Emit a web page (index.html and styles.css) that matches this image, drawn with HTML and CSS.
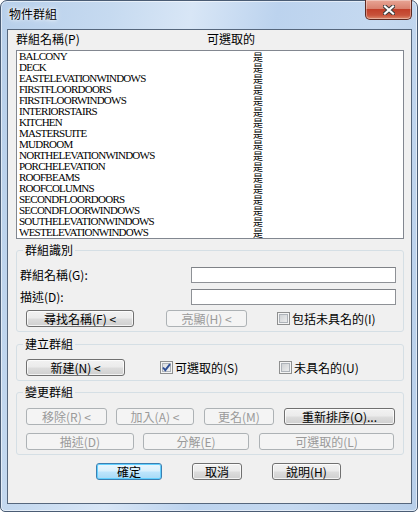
FILE: index.html
```html
<!DOCTYPE html>
<html lang="zh-Hant">
<head>
<meta charset="utf-8">
<title>物件群組</title>
<link rel="stylesheet" href="styles.css">
</head>
<body>
<div class="window">
  <div class="titlebar">
    <span class="title">物件群組</span>
    <div class="close">
      <svg width="12" height="10" viewBox="0 0 12 10">
        <path d="M2 1.5 L10 8.5 M10 1.5 L2 8.5" stroke="#3c3c3c" stroke-width="4.2" stroke-linecap="square" fill="none"/>
        <path d="M2 1.5 L10 8.5 M10 1.5 L2 8.5" stroke="#ffffff" stroke-width="2.2" stroke-linecap="square" fill="none"/>
      </svg>
    </div>
  </div>
  <div class="client">
    <div class="list-header"><span class="col-name">群組名稱(P)</span><span class="col-sel">可選取的</span></div>
    <div class="list">
      <div class="row"><span class="name">BALCONY</span><span class="sel">是</span></div>
      <div class="row"><span class="name">DECK</span><span class="sel">是</span></div>
      <div class="row"><span class="name">EASTELEVATIONWINDOWS</span><span class="sel">是</span></div>
      <div class="row"><span class="name">FIRSTFLOORDOORS</span><span class="sel">是</span></div>
      <div class="row"><span class="name">FIRSTFLOORWINDOWS</span><span class="sel">是</span></div>
      <div class="row"><span class="name">INTERIORSTAIRS</span><span class="sel">是</span></div>
      <div class="row"><span class="name">KITCHEN</span><span class="sel">是</span></div>
      <div class="row"><span class="name">MASTERSUITE</span><span class="sel">是</span></div>
      <div class="row"><span class="name">MUDROOM</span><span class="sel">是</span></div>
      <div class="row"><span class="name">NORTHELEVATIONWINDOWS</span><span class="sel">是</span></div>
      <div class="row"><span class="name">PORCHELEVATION</span><span class="sel">是</span></div>
      <div class="row"><span class="name">ROOFBEAMS</span><span class="sel">是</span></div>
      <div class="row"><span class="name">ROOFCOLUMNS</span><span class="sel">是</span></div>
      <div class="row"><span class="name">SECONDFLOORDOORS</span><span class="sel">是</span></div>
      <div class="row"><span class="name">SECONDFLOORWINDOWS</span><span class="sel">是</span></div>
      <div class="row"><span class="name">SOUTHELEVATIONWINDOWS</span><span class="sel">是</span></div>
      <div class="row"><span class="name">WESTELEVATIONWINDOWS</span><span class="sel">是</span></div>
    </div>

    <div class="group g1">
      <div class="legend">群組識別</div>
      <div class="field f1"><span class="flabel">群組名稱(G):</span><div class="input"></div></div>
      <div class="field f2"><span class="flabel">描述(D):</span><div class="input"></div></div>
      <div class="btnrow r1">
        <div class="btn w108">尋找名稱(F) &lt;</div>
        <div class="btn disabled w81 ml32">亮顯(H) &lt;</div>
        <div class="check ml30"><span class="box"></span><span class="clabel">包括未具名的(I)</span></div>
      </div>
    </div>

    <div class="group g2">
      <div class="legend">建立群組</div>
      <div class="btnrow r2">
        <div class="btn w99">新建(N) &lt;</div>
        <div class="check c1"><span class="box checked"><svg width="11" height="11" viewBox="0 0 11 11"><path d="M2 5.5 L4.3 8.2 L9 2.2" stroke="#2f4f95" stroke-width="1.9" fill="none" stroke-linejoin="miter"/></svg></span><span class="clabel">可選取的(S)</span></div>
        <div class="check"><span class="box"></span><span class="clabel">未具名的(U)</span></div>
      </div>
    </div>

    <div class="group g3">
      <div class="legend">變更群組</div>
      <div class="btnrow r3">
        <div class="btn disabled w81">移除(R) &lt;</div>
        <div class="btn disabled w78 ml9">加入(A) &lt;</div>
        <div class="btn disabled w70 ml10">更名(M)</div>
        <div class="btn w111 ml10">重新排序(O)...</div>
      </div>
      <div class="btnrow r4">
        <div class="btn disabled w108">描述(D)</div>
        <div class="btn disabled w106 ml9">分解(E)</div>
        <div class="btn disabled w135 ml10">可選取的(L)</div>
      </div>
    </div>

    <div class="dlgbuttons">
      <div class="btn default w66">確定</div>
      <div class="btn w50 ml30">取消</div>
      <div class="btn w69 ml30">說明(H)</div>
    </div>
  </div>
</div>
</body>
</html>
```
FILE: styles.css
```css
* { box-sizing: border-box; }
html, body { margin: 0; padding: 0; }
body {
  width: 418px;
  height: 512px;
  background: #ffffff;
  font-family: "Noto Sans CJK TC", "Noto Sans", sans-serif;
  font-size: 12px;
  color: #000;
  overflow: hidden;
}
.window {
  width: 418px;
  height: 512px;
  border: 1px solid #4a5c74;
  border-radius: 7px 7px 5px 5px;
  background: linear-gradient(100deg, #b7cfea 0%, #c6daf0 22%, #d8e6f6 38%, #bcd3ee 55%, #c5d9f0 75%, #b8cfea 100%);
  box-shadow: inset 0 0 0 1px rgba(255,255,255,0.55);
  display: flex;
  flex-direction: column;
}
.titlebar {
  height: 28px;
  display: flex;
  align-items: flex-start;
  flex: none;
}
.title {
  padding: 6px 0 0 8px;
  line-height: 14px;
  font-size: 12px;
  color: #000;
  text-shadow: 0 0 6px #ffffff, 0 0 3px #ffffff;
}
.close {
  margin: -1px 5px 0 auto;
  width: 47px;
  height: 20px;
  border: 1px solid #5e2a22;
  border-top: none;
  border-radius: 0 0 5px 5px;
  background: linear-gradient(#e8a595 0%, #d9826f 45%, #c2402a 50%, #c8533b 80%, #dd8a6c 100%);
  box-shadow: inset 0 0 0 1px rgba(255,255,255,0.35);
  display: flex;
  align-items: center;
  justify-content: center;
}
.close svg { display: block; }

.client {
  margin: 0 5px 0 6px;
  width: 405px;
  height: 475px;
  border: 1px solid #56677d;
  background: #f0f0f0;
  padding: 0 7px 0 8px;
  flex: none;
}
.list-header {
  height: 20px;
  padding-top: 2px;
  line-height: 14px;
  display: flex;
}
.col-name { width: 191px; }
.list {
  width: 388px;
  height: 189px;
  border: 1px solid #828790;
  background: #fff;
  padding-left: 2px;
}
.row {
  height: 11px;
  display: flex;
  align-items: center;
  line-height: 11px;
}
.name {
  width: 234px;
  font-family: "Liberation Serif", serif;
  font-size: 11px;
  letter-spacing: -0.75px;
  line-height: 11px;
}
.sel {
  font-size: 10px;
  line-height: 11px;
}

.group {
  width: 388px;
  border: 1px solid #d5dfe5;
  border-radius: 3px;
  padding: 0 0 4px 0;
}
.legend {
  width: max-content;
  margin: -8px 0 0 6px;
  padding: 0 2px;
  background: #f0f0f0;
  line-height: 14px;
}
.g1 { margin-top: 11px; }
.g2 { margin-top: 12px; }
.g3 { margin-top: 11px; }

.field {
  height: 16px;
  display: flex;
  align-items: center;
  padding-left: 3px;
  line-height: 14px;
}
.f1 { margin-top: 10px; }
.f2 { margin-top: 6px; }
.flabel { flex: 1; }
.input {
  width: 205px;
  height: 16px;
  margin-right: 7px;
  border: 1px solid #8e9196;
  border-top-color: #7f8287;
  background: #fff;
}

.btnrow {
  display: flex;
  align-items: center;
  padding-left: 9px;
  height: 17px;
}
.r1 { margin-top: 5px; }
.r2 { margin-top: 8px; }
.r3 { margin-top: 9px; }
.r4 { margin-top: 8px; }

.btn {
  height: 17px;
  border: 1px solid #707070;
  border-radius: 3px;
  background: linear-gradient(#f2f2f2 0%, #ebebeb 48%, #dddddd 52%, #cfcfcf 100%);
  box-shadow: inset 0 0 0 1px rgba(255,255,255,0.75);
  display: flex;
  align-items: center;
  justify-content: center;
  line-height: 13px;
  font-size: 12px;
  white-space: nowrap;
  flex: none;
}
.btn.disabled {
  border-color: #adb2b5;
  background: #f4f4f4;
  box-shadow: none;
  color: #9a9a9a;
}
.btn.default {
  border-color: #3c7fb1;
  background: linear-gradient(#eaf6fd 0%, #d9f0fc 48%, #bee6fd 52%, #a7d9f5 100%);
  box-shadow: inset 0 0 0 1px #62d0ff;
}
.w50 { width: 50px; }
.w66 { width: 66px; }
.w69 { width: 69px; }
.w70 { width: 70px; }
.w78 { width: 78px; }
.w81 { width: 81px; }
.w99 { width: 99px; }
.w106 { width: 106px; }
.w108 { width: 108px; }
.w111 { width: 111px; }
.w135 { width: 135px; }
.ml9 { margin-left: 9px; }
.ml10 { margin-left: 10px; }
.ml30 { margin-left: 30px; }
.ml32 { margin-left: 32px; }

.check {
  display: flex;
  align-items: center;
  line-height: 14px;
  flex: none;
}
.c1 { width: 119px; margin-left: 35px; }
.box {
  width: 13px;
  height: 13px;
  border: 1px solid #8e8f8f;
  background: #f4f4f4;
  box-shadow: inset 0 0 0 1px #f4f4f4, inset 0 0 0 2px #aeb3b9;
  background-image: linear-gradient(135deg, #c8cbce 0%, #e6e7e8 70%, #f0f0f0 100%);
  margin-right: 2px;
  flex: none;
  display: flex;
  align-items: center;
  justify-content: center;
}
.box.checked {
  background-image: linear-gradient(135deg, #d6d9dc 0%, #f0f1f2 80%);
}
.box svg { display: block; }
.clabel { white-space: nowrap; }

.dlgbuttons {
  display: flex;
  margin-top: 8px;
  padding-left: 80px;
  height: 17px;
}
```
